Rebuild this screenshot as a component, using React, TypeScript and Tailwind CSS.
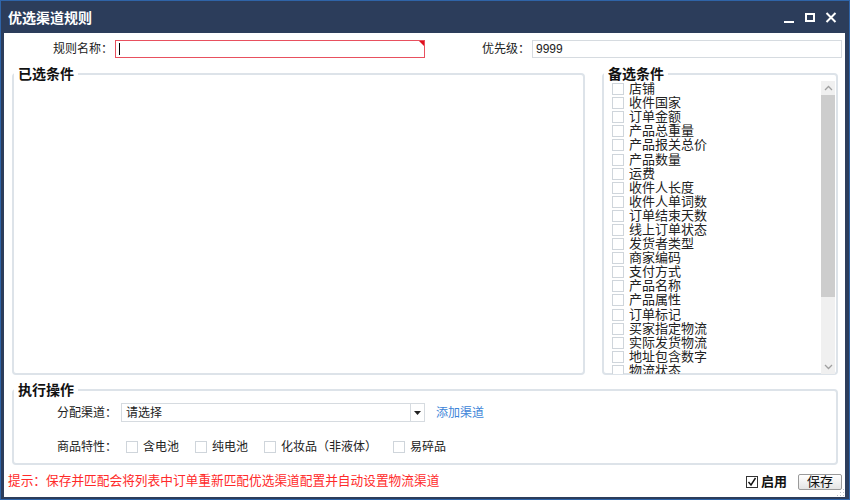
import React, { FC } from "react";

const candidates = [
  "店铺",
  "收件国家",
  "订单金额",
  "产品总重量",
  "产品报关总价",
  "产品数量",
  "运费",
  "收件人长度",
  "收件人单词数",
  "订单结束天数",
  "线上订单状态",
  "发货者类型",
  "商家编码",
  "支付方式",
  "产品名称",
  "产品属性",
  "订单标记",
  "买家指定物流",
  "实际发货物流",
  "地址包含数字",
  "物流状态",
];

const traits = ["含电池", "纯电池", "化妆品（非液体）", "易碎品"];

const Box: FC = () => (
  <span className="inline-block w-[12px] h-[12px] shrink-0 border border-[#cfd5db] bg-white" />
);

const App: FC = () => {
  return (
    <div className="w-[850px] h-[500px] bg-[#2c3d5b] border border-[#2f64a8] flex flex-col font-['Liberation_Sans','Noto_Sans_CJK_SC',sans-serif] text-[12px] text-[#222]">
      {/* title bar */}
      <div className="h-[32px] flex items-center pl-[7px] pr-[12px] text-white">
        <span className="text-[14px] font-bold mt-[2px]">优选渠道规则</span>
        <div className="ml-auto flex items-center gap-[10px] mt-[1px]">
          <svg width="11" height="12" viewBox="0 0 11 12">
            <rect x="0" y="9" width="10" height="2" fill="#fff" />
          </svg>
          <svg width="10" height="10" viewBox="0 0 10 10">
            <rect x="1" y="1" width="8" height="7" fill="none" stroke="#fff" strokeWidth="2" />
          </svg>
          <svg width="12" height="11" viewBox="0 0 12 11">
            <path d="M1.5 1 L10.5 10 M10.5 1 L1.5 10" stroke="#fff" strokeWidth="2" />
          </svg>
        </div>
      </div>

      {/* body */}
      <div className="flex-1 bg-white ml-[3px] mr-[4px] mb-[2px] flex flex-col relative">
        {/* rule name + priority */}
        <div className="flex items-center mt-[7px] h-[18px]">
          <span className="w-[109px] text-right">规则名称：</span>
          <div className="relative ml-[2px] w-[310px] h-[18px] border border-[#e8505e] bg-white flex items-center">
            <span className="ml-[3px] w-px h-[12px] bg-black" />
            <span className="absolute right-0 top-0 w-0 h-0 border-l-[5px] border-l-transparent border-t-[5px] border-t-[#e0101e]" />
          </div>
          <span className="w-[105px] text-right">优先级：</span>
          <div className="ml-[2px] flex-1 mr-[3px] h-[18px] border border-[#d6dbe0] flex items-center pl-[3px]">
            9999
          </div>
        </div>

        {/* condition groups */}
        <div className="flex mt-[8px] ml-[8px]">
          <fieldset className="w-[573px] h-[309px] border-2 border-[#dde3e9] rounded-[4px]">
            <legend className="px-[4px] text-[14px] font-bold leading-[16px] text-[#111]">已选条件</legend>
          </fieldset>
          <fieldset className="ml-[17px] w-[236px] h-[309px] border-2 border-[#dde3e9] rounded-[4px] flex">
            <legend className="px-[4px] text-[14px] font-bold leading-[16px] text-[#111]">备选条件</legend>
            <div className="flex w-full h-[293px] mt-[-1px]">
              <div className="flex-1 overflow-hidden pt-[1px] pl-[8px]">
                {candidates.map((c) => (
                  <div key={c} className="h-[14.1px] flex items-center gap-[5px] text-[13px] leading-[14px] text-[#222] whitespace-nowrap">
                    <Box />
                    <span>{c}</span>
                  </div>
                ))}
              </div>
              <div className="w-[14px] mr-[1px] bg-[#f0f0f0] flex flex-col">
                <div className="h-[14px] flex items-center justify-center">
                  <svg width="9" height="6" viewBox="0 0 9 6">
                    <path d="M1 5 L4.5 1.5 L8 5" fill="none" stroke="#a0a0a0" strokeWidth="1.3" />
                  </svg>
                </div>
                <div className="h-[202px] bg-[#cdcdcd]" />
                <div className="flex-1" />
                <div className="h-[14px] flex items-center justify-center">
                  <svg width="9" height="6" viewBox="0 0 9 6">
                    <path d="M1 1 L4.5 4.5 L8 1" fill="none" stroke="#a0a0a0" strokeWidth="1.3" />
                  </svg>
                </div>
              </div>
            </div>
          </fieldset>
        </div>

        {/* actions */}
        <fieldset className="mt-[7px] ml-[8px] w-[826px] h-[83px] border-2 border-[#dde3e9] rounded-[4px]">
          <legend className="px-[4px] text-[14px] font-bold leading-[16px] text-[#111]">执行操作</legend>
          <div className="flex items-center pl-[43px] pt-[5px]">
            <span className="w-[60px]">分配渠道：</span>
            <div className="ml-[4px] w-[304px] h-[19px] border border-[#d6dbe0] flex items-center">
              <span className="pl-[4px] flex-1">请选择</span>
              <span className="w-[14px] h-full border-l border-[#d6dbe0] flex items-center justify-center">
                <svg width="7" height="4" viewBox="0 0 7 4">
                  <path d="M0 0 H7 L3.5 4 Z" fill="#222" />
                </svg>
              </span>
            </div>
            <span className="ml-[11px] text-[#3c84d8]">添加渠道</span>
          </div>
          <div className="flex items-center pl-[43px] mt-[18px] h-[14px]">
            <span className="w-[60px]">商品特性：</span>
            <div className="ml-[9px] flex items-center gap-[16px]">
              {traits.map((t) => (
                <span key={t} className="flex items-center gap-[5px]">
                  <Box />
                  <span>{t}</span>
                </span>
              ))}
            </div>
          </div>
        </fieldset>

        {/* footer */}
        <div className="flex items-center mt-[9px] h-[16px] pl-[4px] pr-[3px]">
          <span className="text-[12.7px] text-[#ff2a2a]">提示：保存并匹配会将列表中订单重新匹配优选渠道配置并自动设置物流渠道</span>
          <span className="ml-auto w-[12px] h-[12px] border border-[#333] bg-white flex items-center justify-center">
            <svg width="10" height="10" viewBox="0 0 10 10">
              <path d="M1.5 5 L4 8 L8.5 1" fill="none" stroke="#111" strokeWidth="1.4" />
            </svg>
          </span>
          <span className="ml-[3px] text-[13px] font-bold text-[#111]">启用</span>
          <button className="ml-[11px] w-[44px] h-[16px] border border-[#9a9a9a] rounded-[2px] bg-gradient-to-b from-white to-[#e4e4e4] text-[13px] leading-[14px] text-[#111]">
            保存
          </button>
        </div>
        <svg className="absolute right-0 bottom-0" width="8" height="8" viewBox="0 0 8 8">
          <g fill="#b8c0c8">
            <rect x="6" y="0" width="1" height="1" />
            <rect x="3" y="3" width="1" height="1" />
            <rect x="6" y="3" width="1" height="1" />
            <rect x="0" y="6" width="1" height="1" />
            <rect x="3" y="6" width="1" height="1" />
            <rect x="6" y="6" width="1" height="1" />
          </g>
        </svg>
      </div>
    </div>
  );
};

export default App;
